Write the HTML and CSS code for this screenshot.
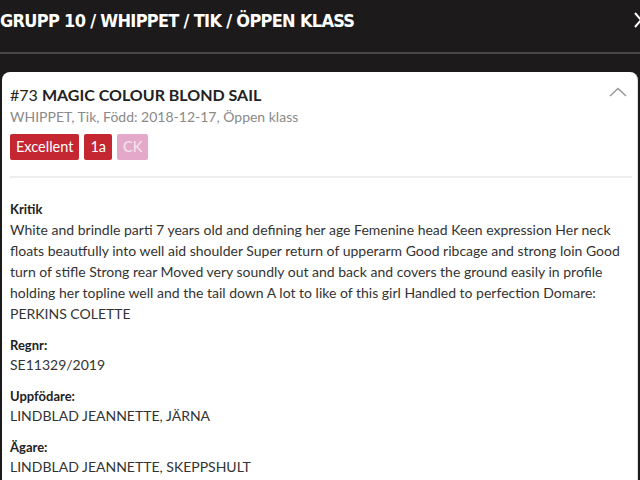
FILE: index.html
```html
<!DOCTYPE html>
<html lang="sv">
<head>
<meta charset="utf-8">
<title>Grupp 10 / Whippet</title>
<link rel="stylesheet" href="styles.css">
</head>
<body>
<div class="screen">
  <header class="topbar">
    <h1 class="topbar-title">GRUPP 10 / WHIPPET / TIK / ÖPPEN KLASS</h1>
    <svg class="close-icon" width="14" height="16" viewBox="0 0 14 16"><path d="M1 1 L13 15 M13 1 L1 15" stroke="#fff" stroke-width="2" fill="none"/></svg>
  </header>
  <div class="topbar-gap"></div>
  <main class="card">
    <div class="card-head">
      <div class="dog-title"><span class="num">#73</span> <span class="name">MAGIC COLOUR BLOND SAIL</span></div>
      <svg class="chevron" width="18" height="10" viewBox="0 0 18 10"><path d="M1 9 L9 1.5 L17 9" stroke="#9a9a9a" stroke-width="1.6" fill="none"/></svg>
    </div>
    <div class="dog-sub">WHIPPET, Tik, Född: 2018-12-17, Öppen klass</div>
    <div class="badges">
      <span class="badge badge-red">Excellent</span>
      <span class="badge badge-red">1a</span>
      <span class="badge badge-pink">CK</span>
    </div>
    <hr class="divider">
    <section class="field">
      <div class="label">Kritik</div>
      <p class="critique">White and brindle parti 7 years old and defining her age Femenine head Keen expression Her neck floats beautfully into well aid shoulder Super return of upperarm Good ribcage and strong loin Good turn of stifle Strong rear Moved very soundly out and back and covers the ground easily in profile holding her topline well and the tail down A lot to like of this girl Handled to perfection Domare: PERKINS COLETTE</p>
    </section>
    <section class="field">
      <div class="label">Regnr:</div>
      <div class="value">SE11329/2019</div>
    </section>
    <section class="field">
      <div class="label">Uppfödare:</div>
      <div class="value">LINDBLAD JEANNETTE, JÄRNA</div>
    </section>
    <section class="field">
      <div class="label">Ägare:</div>
      <div class="value">LINDBLAD JEANNETTE, SKEPPSHULT</div>
    </section>
  </main>
</div>
</body>
</html>
```

FILE: styles.css
```css
html, body {
  margin: 0;
  padding: 0;
  background: #1c1a1b;
  height: 480px;
  overflow: hidden;
}
.screen {
  width: 640px;
  height: 480px;
  background: #1c1a1b;
  font-family: "Lato", "DejaVu Sans", sans-serif;
  color: #333;
  overflow: hidden;
}
.topbar {
  display: flex;
  align-items: center;
  justify-content: space-between;
  box-sizing: border-box;
  height: 54px;
  border-bottom: 2px solid #474747;
}
.topbar-title {
  margin: -12px 0 0 0;
  color: #fff;
  font-family: "Liberation Sans Narrow", "DejaVu Sans Condensed", sans-serif;
  font-weight: bold;
  font-size: 18px;
  letter-spacing: -0.7px;
}
.close-icon {
  margin-right: -8px;
  margin-top: -12px;
}
.topbar-gap {
  height: 18px;
}
.card {
  margin-left: 2px;
  width: 636px;
  height: 420px;
  background: #fff;
  border-radius: 8px 8px 0 0;
  border-right: 1px solid #ddd;
  box-sizing: border-box;
  padding: 12px 8px 0 8px;
}
.card-head {
  display: flex;
  justify-content: space-between;
  align-items: flex-start;
}
.dog-title {
  font-size: 16px;
  line-height: 22px;
  color: #222;
}
.dog-title .num {
  font-weight: normal;
}
.dog-title .name {
  font-weight: bold;
}
.chevron {
  margin-top: 3px;
  margin-right: 2px;
}
.dog-sub {
  font-size: 14px;
  line-height: 22px;
  color: #8a8a8a;
}
.badges {
  display: flex;
  gap: 5px;
  margin-top: 6px;
}
.badge {
  display: inline-block;
  height: 26px;
  line-height: 26px;
  padding: 0 6px;
  font-size: 14.5px;
  color: #fff;
  border-radius: 2px;
}
.badge-red {
  background: #c42731;
}
.badge-pink {
  background: #e4a9ca;
  color: #f6e6ef;
}
.divider {
  border: none;
  border-top: 2px solid #eeeeee;
  margin: 16px 0 0 0;
  width: 622px;
}
.field {
  margin-top: 11px;
}
.field:first-of-type {
  margin-top: 21px;
}
.label {
  font-weight: bold;
  font-size: 13px;
  line-height: 20px;
  color: #222;
}
.critique {
  margin: 0;
  font-size: 14px;
  line-height: 21px;
  width: 620px;
}
.value {
  font-size: 14px;
  line-height: 20px;
}
```
